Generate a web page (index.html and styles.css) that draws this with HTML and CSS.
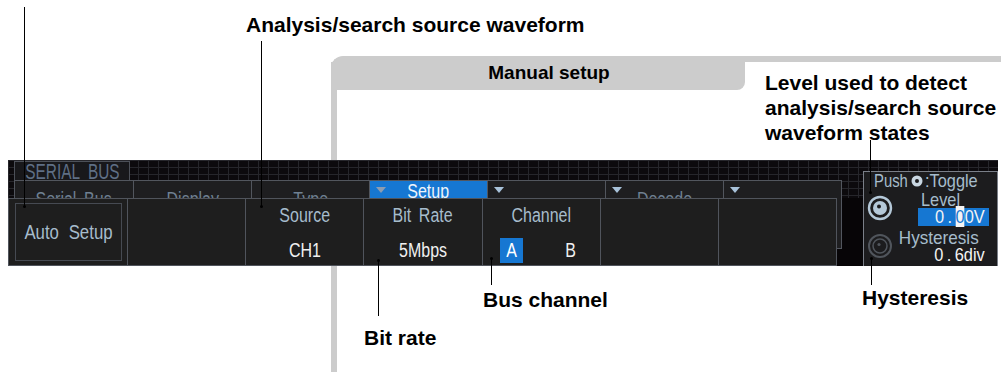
FILE: index.html
```html
<!DOCTYPE html>
<html lang="en">
<head>
    <meta charset="UTF-8">
    <meta name="viewport" content="width=device-width, initial-scale=1.0">
    <title>Serial Bus - Manual setup</title>
    <link rel="stylesheet" href="styles.css">
</head>
<body>
<div class="page">

    <div class="manual">
        <div class="manual-head">Manual setup</div>
    </div>

    <div class="screen">
        <div class="title-tab"><span class="sq">SERIAL BUS</span></div>

        <div class="tabs">
            <div class="tab"><span class="tab-text"><span class="sq">Serial Bus</span></span></div>
            <div class="tab"><span class="tab-text"><span class="sq">Display</span></span></div>
            <div class="tab"><span class="tab-text"><span class="sq">Type</span></span></div>
            <div class="tab tab-on"><span class="tri"></span><span class="tab-text"><span class="sq">Setup</span></span></div>
            <div class="tab"><span class="tri"></span></div>
            <div class="tab"><span class="tri"></span><span class="tab-text"><span class="sq">Decode</span></span></div>
            <div class="tab"><span class="tri"></span></div>
        </div>

        <div class="menu">
            <div class="cell">
                <div class="btn"><span class="sq">Auto Setup</span></div>
            </div>
            <div class="cell"></div>
            <div class="cell">
                <div class="lbl"><span class="sq">Source</span></div>
                <div class="val"><span class="sq">CH1</span></div>
            </div>
            <div class="cell">
                <div class="lbl"><span class="sq">Bit Rate</span></div>
                <div class="val"><span class="sq">5Mbps</span></div>
            </div>
            <div class="cell">
                <div class="lbl"><span class="sq">Channel</span></div>
                <div class="val pair">
                    <span><b class="sel"><span class="sq">A</span></b></span>
                    <span><span class="sq">B</span></span>
                </div>
            </div>
            <div class="cell"></div>
            <div class="cell"></div>
        </div>

        <div class="knob-panel">
            <div class="push"><span class="sq sq-left">Push</span><svg class="mini" width="12" height="12" viewBox="0 0 12 12">
                    <circle cx="6" cy="6" r="5.5" fill="#c9d7e2"/>
                    <circle cx="6" cy="6" r="2" fill="#1c1c1e"/>
                </svg><span class="sq sq-left">:Toggle</span></div>
            <div class="knob-row">
                <svg class="knob" width="26" height="26" viewBox="0 0 26 26">
                    <circle cx="13" cy="13" r="11" fill="none" stroke="#b4c8d8" stroke-width="2.4"/>
                    <circle cx="13" cy="13" r="7" fill="#b4c8d8"/>
                    <circle cx="12" cy="11.5" r="2" fill="#1c1c1e"/>
                </svg>
                <div class="knob-text">
                    <div class="k-lbl k-level"><span class="sq sq-left">Level</span></div>
                    <div class="k-val k-active"><span class="sq sq-right">0<span class="gap">.</span><span class="cur">0</span>0V</span></div>
                </div>
            </div>
            <div class="knob-row">
                <svg class="knob" width="26" height="26" viewBox="0 0 26 26">
                    <circle cx="13" cy="13" r="11" fill="none" stroke="#50555c" stroke-width="2"/>
                    <circle cx="13" cy="13" r="7" fill="none" stroke="#50555c" stroke-width="1.5"/>
                    <circle cx="12" cy="11.5" r="1.6" fill="#50555c"/>
                </svg>
                <div class="knob-text">
                    <div class="k-lbl k-hys"><span class="sq sq-right">Hysteresis</span></div>
                    <div class="k-val"><span class="sq sq-right">0<span class="gap">.</span>6div</span></div>
                </div>
            </div>
        </div>
    </div>

    <!-- callouts -->
    <div class="line" style="left: 24px; top: 7px; height: 200px;"></div>
    <div class="line" style="left: 261px; top: 41px; height: 166px;"></div>
    <div class="line" style="left: 870px; top: 140px; height: 53px;"></div>
    <div class="line up" style="left: 378px; top: 260px; height: 56px;"></div>
    <div class="line up" style="left: 491px; top: 258px; height: 27px;"></div>
    <div class="line up" style="left: 871px; top: 258px; height: 27px;"></div>

    <div class="note" style="left: 246px; top: 12px;">Analysis/search source waveform</div>
    <div class="note" style="left: 765px; top: 70px;">Level used to detect<br>analysis/search source<br>waveform states</div>
    <div class="note" style="left: 483px; top: 287px;">Bus channel</div>
    <div class="note" style="left: 862px; top: 285px;">Hysteresis</div>
    <div class="note" style="left: 364px; top: 325px;">Bit rate</div>

</div>
</body>
</html>
```

FILE: styles.css
```css
html, body {
    margin: 0;
    padding: 0;
    background: #ffffff;
}

.page {
    position: relative;
    width: 1001px;
    height: 372px;
    overflow: hidden;
    font-family: "Liberation Sans", Arial, sans-serif;
}

/* grey "Manual setup" frame */
.manual {
    position: absolute;
    left: 331px;
    top: 56px;
    right: 0;
    bottom: 0;
    border-top: 6px solid #cccccc;
    border-left: 6px solid #cccccc;
    border-top-left-radius: 12px;
}

.manual-head {
    width: 414px;
    height: 28px;
    margin-left: -6px;
    padding-left: 22px;
    box-sizing: border-box;
    background: #cccccc;
    border-bottom-right-radius: 8px;
    text-align: center;
    font-weight: bold;
    font-size: 19px;
    line-height: 22px;
    color: #000;
}

/* oscilloscope screen */
.screen {
    position: absolute;
    left: 8px;
    top: 160px;
    width: 990px;
    height: 106px;
    background-color: #070507;
    font-family: "Liberation Sans", Arial, sans-serif;
}

.screen::before {
    content: "";
    position: absolute;
    left: 0;
    top: 0;
    right: 0;
    height: 38px;
    background-color: #0c0a0d;
    background-image:
        linear-gradient(90deg, #26262b 1px, transparent 1px),
        linear-gradient(#26262b 1px, transparent 1px);
    background-size: 10px 7px;
}

/* narrow display lettering */
.sq {
    display: inline-block;
    transform: scaleX(0.8);
    word-spacing: 4px;
    white-space: nowrap;
}

.sq-left {
    transform-origin: left center;
}

.sq-right {
    transform-origin: right center;
}

.title-tab {
    position: relative;
    margin-left: 6px;
    margin-top: 1px;
    width: 116px;
    height: 19px;
    box-sizing: border-box;
    border: 1px solid #4c5058;
    border-bottom: none;
    background: #18181b;
    color: #5f6f85;
    font-size: 22px;
    line-height: 19px;
    display: flex;
    justify-content: center;
    overflow: hidden;
}

.title-tab .sq {
    flex: none;
    transform: scaleX(0.7);
    word-spacing: 6px;
}

.tabs {
    position: relative;
    margin-left: 6px;
    width: 828px;
    height: 69px;
    box-sizing: border-box;
    border: 1px solid #52565e;
    background: #1e1e20;
    display: grid;
    grid-template-columns: repeat(7, 1fr);
    align-items: start;
}

.tab {
    position: relative;
    height: 17px;
    border-left: 1px solid #52565e;
    overflow: hidden;
    text-align: center;
    color: #6f8092;
    font-size: 20px;
    line-height: 20px;
}

.tab:first-child {
    border-left: none;
}

.tab-text {
    display: block;
    padding-top: 8px;
}

.tab-on {
    background: #1677d2;
    color: #eef4fa;
}

.tab-on .tab-text {
    padding-top: 0;
}

.tri {
    position: absolute;
    left: 6px;
    top: 6px;
    width: 0;
    height: 0;
    border-left: 5px solid transparent;
    border-right: 5px solid transparent;
    border-top: 6px solid #a8c2da;
}

.tab-on .tri {
    border-top-color: #8c9db2;
}

.menu {
    position: relative;
    margin-top: -51px;
    width: 829px;
    height: 68px;
    box-sizing: border-box;
    border: 1px solid #50545c;
    background: #1e1e1e;
    display: grid;
    grid-template-columns: repeat(7, 1fr);
}

.cell {
    border-left: 1px solid #50545c;
    display: flex;
    flex-direction: column;
    text-align: center;
    font-size: 20px;
}

.cell:first-child {
    border-left: none;
}

.lbl {
    height: 33px;
    line-height: 33px;
    color: #a6bccc;
}

.val {
    height: 33px;
    line-height: 36px;
    color: #f0f0f0;
}

.pair {
    display: flex;
}

.pair > span {
    flex: 1;
}

.sel {
    display: inline-block;
    width: 23px;
    height: 25px;
    margin-top: 6px;
    line-height: 25px;
    font-weight: normal;
    background: #1677d2;
    color: #ffffff;
}

.btn {
    margin: 4px 5px 4px 6px;
    flex: 1;
    border: 1px solid #464a52;
    color: #a6bccc;
    display: flex;
    align-items: center;
    justify-content: center;
}

.btn .sq {
    transform: scaleX(0.84);
    word-spacing: 6px;
}

/* rotary knob panel */
.knob-panel {
    position: absolute;
    left: 855px;
    top: 11px;
    width: 135px;
    height: 95px;
    box-sizing: border-box;
    border: 1px solid #7a7f88;
    border-bottom: none;
    background: #1c1c1e;
    color: #a6bccc;
    font-size: 19px;
    padding: 0 8px 0 3px;
}

.knob-panel .sq {
    transform: scaleX(0.86);
}

.knob-panel .sq-left {
    transform-origin: left center;
}

.knob-panel .sq-right {
    transform-origin: right center;
}

.push {
    height: 17px;
    line-height: 17px;
    margin-left: 7px;
    white-space: nowrap;
    display: flex;
    align-items: center;
}

.push .sq:first-child {
    transform: scaleX(0.78);
    margin-right: -6px;
}

.mini {
    flex: none;
    margin: 0 -8px 0 0;
}

.push .sq:last-child {
    margin-left: 10px;
}

.knob-row {
    display: flex;
    align-items: center;
    gap: 8px;
    height: 38px;
}

.knob {
    flex: none;
}

.knob-text {
    flex: 1;
    min-width: 0;
}

.k-lbl,
.k-val {
    display: flex;
    justify-content: flex-end;
}

.k-lbl .sq,
.k-val .sq {
    flex: none;
}

.k-lbl {
    line-height: 17px;
}

.k-level {
    justify-content: flex-start;
    padding-left: 20px;
}

.k-hys {
    padding-right: 10px;
}

.k-hys .sq {
    transform: scaleX(0.9);
}

.k-val {
    line-height: 18px;
    color: #f4f4f4;
    padding-right: 4px;
}

.k-active {
    background: #1677d2;
    margin-left: 17px;
}

.gap {
    padding: 0 4px;
}

.cur {
    background: #f4f4f4;
    color: #1677d2;
}

/* callouts */
.line {
    position: absolute;
    width: 1px;
    background: #000;
}

.line::after {
    content: "";
    position: absolute;
    left: -1px;
    bottom: -1px;
    width: 3px;
    height: 3px;
    border-radius: 50%;
    background: #000;
}

.line.up::after {
    bottom: auto;
    top: -1px;
}

.note {
    position: absolute;
    font-family: "Liberation Sans", Arial, sans-serif;
    font-weight: bold;
    font-size: 21px;
    line-height: 25px;
    color: #000;
    white-space: nowrap;
}
```
